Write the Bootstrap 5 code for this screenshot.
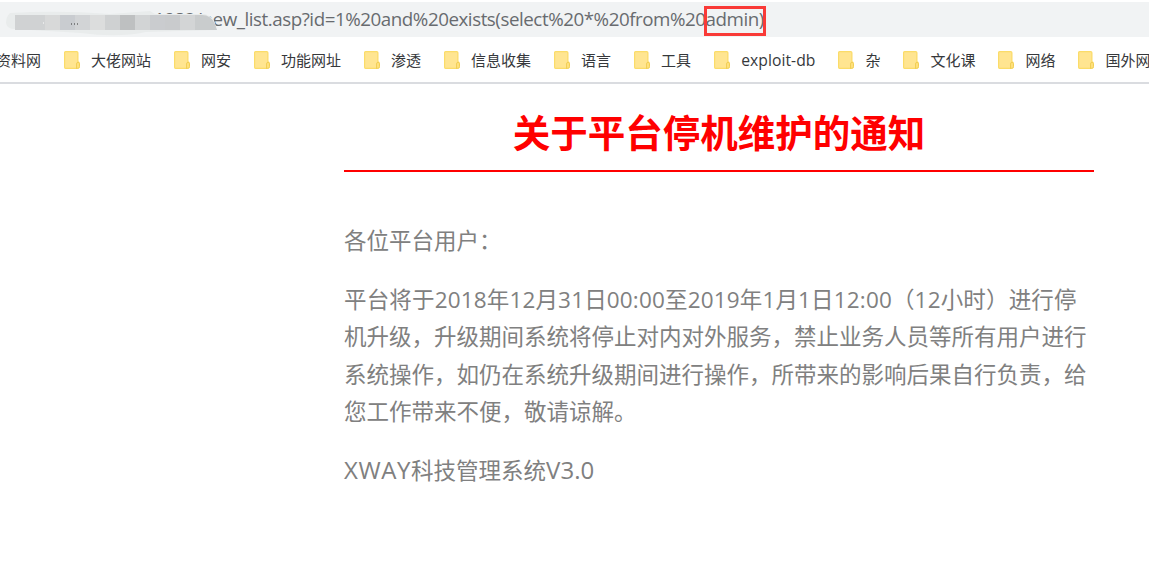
<!DOCTYPE html>
<html lang="zh-CN">
<head>
<meta charset="utf-8">
<meta name="viewport" content="width=device-width, initial-scale=1">
<title>关于平台停机维护的通知</title>
<link rel="stylesheet" href="https://cdn.jsdelivr.net/npm/bootstrap@5.3.0/dist/css/bootstrap.min.css">
<style>
body{font-family:"Open Sans","Noto Sans CJK SC",sans-serif;color:#808080}
.address{height:35px;margin-top:2px;background:#f1f3f4;color:#686b6f;font-size:18.75px;line-height:34px;padding-left:154px}
.url-text{letter-spacing:-.45px}
.boxed{top:4px;left:704px;width:62px;height:30px;border:3px solid #f93a37}
.smudge{left:0;top:0}
.bookmarks{height:47px;border-bottom:2px solid #dadce0;padding-left:0;gap:23px;margin-left:-31px;color:#36383b;font-size:15px;line-height:20px}
.bookmark{gap:11px}
.latin{font-size:15.7px;letter-spacing:.05px}
.notice{width:750px;margin-left:344px}
.notice h1{height:88px;margin:0;padding-top:20px;color:red;font-size:37.5px;line-height:57px;border-bottom:2px solid red}
.notice p{font-size:22.5px;line-height:37.2px;margin:0 0 22px}
.notice p:first-of-type{margin-top:50px}
.dates{letter-spacing:.16px}
.brand{font-size:24px;line-height:1;letter-spacing:.6px}
.version{font-size:24px;line-height:1;letter-spacing:.05px}
</style>
</head>
<body class="bg-white overflow-hidden">
<svg class="d-none">
  <symbol id="folder" viewBox="0 0 16 18">
    <path d="M1.5.5h11q1.5 0 1.5 1.500V10l1.700 1v5q0 1.500-1.500 1.500H1.500Q.5 17.500.5 16.500v-15Q.5.5 1.500.5Z" fill="#ffe591"/>
    <path d="M13 17.300H1.500Q.6 17.300.6 16.300V1.500Q.6.600 1.600.600h11.100q1.200 0 1.200 1.200v9.300" fill="none" stroke="#fbdc69" stroke-width="1.200"/>
    <path d="M12.500 17.300v-4.200q0-1.800 1.500-1.800t1.500 1.500v2.800q0 1.700-1.500 1.700h-2" fill="#ffe07b" stroke="#f1cf55"/>
  </symbol>
</svg>
<header>
  <div class="address position-relative text-nowrap">
    <span class="url-text">1982/new_list.asp?id=1%20and%20exists(select%20*%20from%20admin)</span>
    <svg class="smudge position-absolute" width="225" height="35">
      <path d="M10 11Q60 8 110 12L150 9l5 3h50q10 3 11 13v3l-70 2q-28 6-65 1L15 27q-8 0-9-6 0-6 4-10Z" fill="#e9ecec"/>
      <path d="M146 13h56q9 0 13 9l2 6h-71Z" fill="#c9cccd"/>
      <g>
        <path fill="#d0d2d3" d="M15 13h30v15H15z"/><path fill="#d8d9d9" d="M45 13h15v15H45z"/>
        <path fill="#c9ccd0" d="M60 13h15v15H60z"/><path fill="#d2d4d6" d="M75 13h15v15H75z"/>
        <path fill="#dcdddd" d="M90 13h15v15H90z"/><path fill="#cfd1d2" d="M105 13h15v15h-15z"/>
        <path fill="#bec0c1" d="M120 13h15v15h-15z"/><path fill="#d2d4d5" d="M135 13h15v15h-15z"/>
        <path fill="#cacccf" d="M150 13h15v15h-15z"/><path fill="#c9cbcd" d="M165 13h15v15h-15z"/>
        <path fill="#d3d5d6" d="M180 13h15v15h-15z"/>
      </g>
      <path d="M71 22h1m2 0h1m2 0h1" stroke="#333"/><path d="M43 21h1" stroke="#fff"/>
    </svg>
    <div class="boxed position-absolute"></div>
  </div>
  <nav class="bookmarks d-flex align-items-center text-nowrap">
    <div class="bookmark d-flex align-items-center flex-shrink-0"><svg width="16" height="18"><use href="#folder"/></svg><span>资料网</span></div>
    <div class="bookmark d-flex align-items-center flex-shrink-0"><svg width="16" height="18"><use href="#folder"/></svg><span>大佬网站</span></div>
    <div class="bookmark d-flex align-items-center flex-shrink-0"><svg width="16" height="18"><use href="#folder"/></svg><span>网安</span></div>
    <div class="bookmark d-flex align-items-center flex-shrink-0"><svg width="16" height="18"><use href="#folder"/></svg><span>功能网址</span></div>
    <div class="bookmark d-flex align-items-center flex-shrink-0"><svg width="16" height="18"><use href="#folder"/></svg><span>渗透</span></div>
    <div class="bookmark d-flex align-items-center flex-shrink-0"><svg width="16" height="18"><use href="#folder"/></svg><span>信息收集</span></div>
    <div class="bookmark d-flex align-items-center flex-shrink-0"><svg width="16" height="18"><use href="#folder"/></svg><span>语言</span></div>
    <div class="bookmark d-flex align-items-center flex-shrink-0"><svg width="16" height="18"><use href="#folder"/></svg><span>工具</span></div>
    <div class="bookmark d-flex align-items-center flex-shrink-0"><svg width="16" height="18"><use href="#folder"/></svg><span class="latin">exploit-db</span></div>
    <div class="bookmark d-flex align-items-center flex-shrink-0"><svg width="16" height="18"><use href="#folder"/></svg><span>杂</span></div>
    <div class="bookmark d-flex align-items-center flex-shrink-0"><svg width="16" height="18"><use href="#folder"/></svg><span>文化课</span></div>
    <div class="bookmark d-flex align-items-center flex-shrink-0"><svg width="16" height="18"><use href="#folder"/></svg><span>网络</span></div>
    <div class="bookmark d-flex align-items-center flex-shrink-0"><svg width="16" height="18"><use href="#folder"/></svg><span>国外网</span></div>
  </nav>
</header>
<main class="notice">
  <h1 class="text-center fw-bold">关于平台停机维护的通知</h1>
  <p>各位平台用户：</p>
  <p class="text-nowrap"><span class="dates">平台将于2018年12月31日00:00至2019年1月1日12:00（12小时）进行停</span><br>机升级，升级期间系统将停止对内对外服务，禁止业务人员等所有用户进行<br>系统操作，如仍在系统升级期间进行操作，所带来的影响后果自行负责，给<br>您工作带来不便，敬请谅解。</p>
  <p><span class="brand">XWAY</span>科技管理系统<span class="version">V3.0</span></p>
</main>
<script src="https://cdn.jsdelivr.net/npm/bootstrap@5.3.0/dist/js/bootstrap.bundle.min.js"></script>
</body>
</html>
